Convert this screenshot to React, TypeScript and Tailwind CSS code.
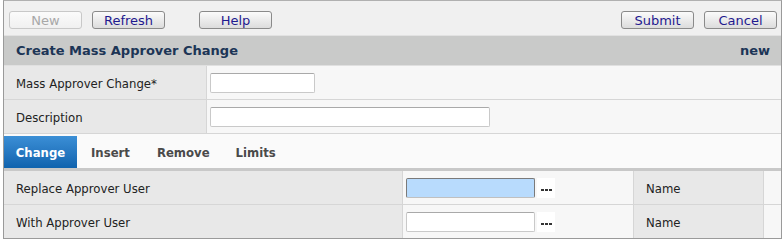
import React from "react";

const btn =
  "h-[18px] w-[73px] rounded-[3px] border border-[#8a8a8a] bg-gradient-to-b from-[#fbfbfb] to-[#dcdcdc] text-[13px] leading-none text-[#1f1a8f]";

const dots = (
  <div className="ml-[2px] flex h-[20px] w-[18px] items-end justify-center gap-[1px] bg-white pb-[7px]">
    <span className="h-[2px] w-[3px] bg-[#333]" />
    <span className="h-[2px] w-[3px] bg-[#333]" />
    <span className="h-[2px] w-[3px] bg-[#333]" />
  </div>
);

export default function App() {
  return (
    <div className="w-[784px] h-[242px] bg-white font-['DejaVu_Sans',Verdana,sans-serif] text-[11.7px] text-[#222]">
      <div className="ml-[3px] w-[779px] border border-[#9a9a9a] border-t-[#b0b0b0]">
        {/* Toolbar */}
        <div className="flex h-[34px] items-center bg-[#f0f0f0] pl-[5px] pr-[4px] pt-[4px]">
          <button className={btn + " border-[#c8c8c8] from-[#f6f6f6] to-[#f0f0f0] text-[#a8a8a8]"}>New</button>
          <button className={btn + " ml-[10px]"}>Refresh</button>
          <button className={btn + " ml-[34px]"}>Help</button>
          <div className="flex-1" />
          <button className={btn}>Submit</button>
          <button className={btn + " ml-[10px]"}>Cancel</button>
        </div>

        {/* Header */}
        <div className="flex h-[30px] items-center justify-between bg-[#c9cac9] px-[12px] border-t border-[#e2e2e2] text-[13px] font-bold text-[#1c3556]">
          <span>Create Mass Approver Change</span>
          <span className="mr-[-1px]">new</span>
        </div>

        {/* Form */}
        <div className="border-t border-[#e0e0e0]">
          {[
            ["Mass Approver Change*", "w-[105px]"],
            ["Description", "w-[280px]"],
          ].map(([label, w]) => (
            <div key={label} className="flex h-[34px] border-b border-[#d6d6d6]">
              <div className="flex w-[203px] items-center bg-[#e8e8e8] pl-[12px] pt-[4px] border-r border-[#d6d6d6]">{label}</div>
              <div className="flex flex-1 items-center bg-[#f7f7f7] pl-[3px]">
                <div className={"h-[20px] rounded-[2px] border border-[#c9c9c9] border-t-[#a9a9a9] bg-white " + w} />
              </div>
            </div>
          ))}
        </div>

        {/* Tabs */}
        <div className="flex h-[37px] items-stretch bg-[#fafafa] pt-[2px] border-b-[3px] border-[#c8c8c8] font-bold text-[#4a4a4a]">
          <div className="flex w-[73px] items-center justify-center pt-[3px] bg-gradient-to-b from-[#3b8fd6] to-[#0f63ae] text-white">Change</div>
          <div className="flex items-center pt-[3px] pl-[14px] pr-[27px]">Insert</div>
          <div className="flex items-center pt-[3px] pr-[26px]">Remove</div>
          <div className="flex items-center pt-[3px]">Limits</div>
        </div>

        {/* Grid */}
        {["Replace Approver User", "With Approver User"].map((label, i) => (
          <div key={label} className={"flex " + (i === 0 ? "h-[34px] border-b border-[#d6d6d6]" : "h-[33px]")}>
            <div className="flex w-[399px] items-center bg-[#e8e8e8] pl-[12px] pt-[4px] border-r border-[#d6d6d6]">{label}</div>
            <div className="flex w-[231px] items-center bg-[#f7f7f7] pl-[3px] border-r border-[#d6d6d6]">
              <div
                className={
                  "h-[20px] w-[129px] rounded-[2px] border " +
                  (i === 0 ? "border-[#7a7a7a] border-b-[#c0c0c0] bg-[#b8dbfd]" : "border-[#c9c9c9] border-t-[#a9a9a9] bg-white")
                }
              />
              {dots}
            </div>
            <div className="flex w-[130px] items-center bg-[#e8e8e8] pl-[12px] pt-[4px] border-r border-[#d6d6d6]">Name</div>
            <div className="flex-1 bg-[#f7f7f7]" />
          </div>
        ))}
      </div>
    </div>
  );
}
